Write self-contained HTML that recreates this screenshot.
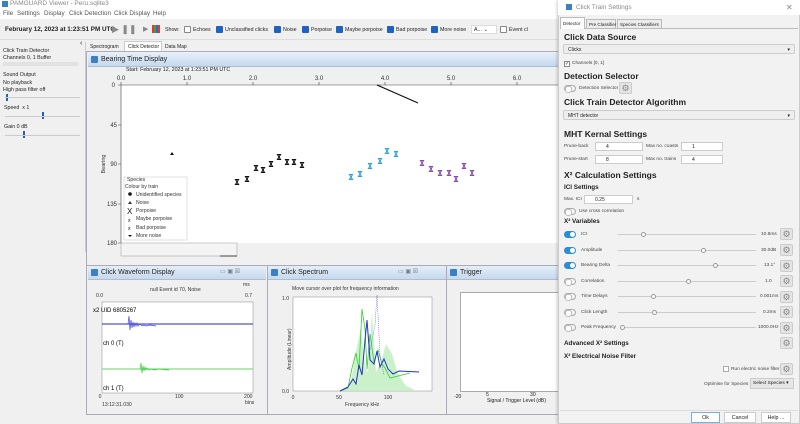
<!DOCTYPE html>
<html><head><meta charset="utf-8"><style>
*{box-sizing:border-box;margin:0;padding:0}
body{width:800px;height:424px;overflow:hidden;background:#f0f0f0;font-family:"Liberation Sans",sans-serif;font-size:6px;color:#222;position:relative}
.a{position:absolute;white-space:nowrap}
.cb{position:absolute;width:7px;height:7px;background:#1e63c0;border-radius:1px}
.cbo{position:absolute;width:7px;height:7px;border:1px solid #888;background:#fff;border-radius:1px}
.h{font-weight:bold;font-size:8.5px;color:#222}
.hs{font-weight:bold;font-size:6.3px}
.dd{position:absolute;height:10px;background:#eee;border:1px solid #ccc;border-radius:2px;font-size:5px;padding:2px 4px}
.tg{position:absolute;width:12px;height:7px;border-radius:4px;border:1px solid #aaa;background:#f4f4f4}
.tg.on{background:#2c8dd0;border-color:#2c8dd0}
.tg.on:after{content:"";position:absolute;right:0;top:0;width:5px;height:5px;border-radius:3px;background:#fff}
.tg:not(.on):after{content:"";position:absolute;left:0;top:0;width:5px;height:5px;border-radius:3px;background:#fff;border:1px solid #bbb}
.gear{position:absolute;width:13px;height:12px;background:#e4e4e4;border:1px solid #ccc;border-radius:2px;color:#888;font-size:9px;line-height:10px;text-align:center}
.sl{position:absolute;height:1px;background:#ccc}
.kn{position:absolute;width:5px;height:5px;border-radius:3px;border:1px solid #999;background:#fff}
.sp{position:absolute;height:9px;border:1px solid #ccc;background:#fff;font-size:5px;padding:1px 0 0 10px}
.ph{position:absolute;height:14px;background:linear-gradient(#e4eef8,#c6d9ee);border-bottom:1px solid #a9bfd6;font-size:7px;padding:3px 0 0 13px}
.ic{position:absolute;left:3px;top:3px;width:7px;height:7px;background:#3b7fc4;border-radius:1px}
.l{font-size:4.8px;color:#444}
</style></head><body>
<div class="a" style="left:0;top:0;width:558px;height:9px;background:#fff;font-size:6.5px;color:#888;padding-left:10px">PAMGUARD Viewer - Peru.sqlite3</div>
<div class="a" style="left:2px;top:1px;width:6px;height:6px;background:#3b7fc4"></div>
<div class="a" style="left:0;top:9px;width:558px;height:10px;background:#fff;font-size:6.3px;color:#555"></div>
<div class="a" style="left:3px;top:10px;font-size:6.3px;color:#555">File</div>
<div class="a" style="left:17px;top:10px;font-size:6.3px;color:#555">Settings</div>
<div class="a" style="left:44px;top:10px;font-size:6.3px;color:#555">Display</div>
<div class="a" style="left:69px;top:10px;font-size:6.3px;color:#555">Click Detection</div>
<div class="a" style="left:114px;top:10px;font-size:6.3px;color:#555">Click Display</div>
<div class="a" style="left:153px;top:10px;font-size:6.3px;color:#555">Help</div>
<div class="a" style="left:0;top:19px;width:558px;height:21px;background:#f0f0f0;border-bottom:1px solid #ddd"></div>
<div class="a" style="left:5px;top:26px;font-size:6.3px;font-weight:bold">February 12, 2023 at 1:23:51 PM UTC</div>
<div class="a" style="left:112px;top:24px;font-size:9px;color:#888">▶ ❚❚</div>
<div class="a" style="left:143px;top:25px;font-size:7px;color:#888">▶</div>
<div class="a" style="left:152px;top:25px;width:8px;height:8px;background:repeating-linear-gradient(90deg,#e33 0 2px,#3a3 2px 4px,#36c 4px 6px)"></div>
<div class="a" style="left:165px;top:27px;font-size:5.3px">Show:</div>
<div class="cbo" style="left:184px;top:26px"></div><div class="a" style="left:193px;top:27px;font-size:5.3px">Echoes</div>
<div class="cb" style="left:216px;top:26px"></div><div class="a" style="left:225px;top:27px;font-size:5.3px">Unclassified clicks</div>
<div class="cb" style="left:274px;top:26px"></div><div class="a" style="left:283px;top:27px;font-size:5.3px">Noise</div>
<div class="cb" style="left:302px;top:26px"></div><div class="a" style="left:311px;top:27px;font-size:5.3px">Porpoise</div>
<div class="cb" style="left:336px;top:26px"></div><div class="a" style="left:345px;top:27px;font-size:5.3px">Maybe porpoise</div>
<div class="cb" style="left:387px;top:26px"></div><div class="a" style="left:396px;top:27px;font-size:5.3px">Bad porpoise</div>
<div class="cb" style="left:431px;top:26px"></div><div class="a" style="left:440px;top:27px;font-size:5.3px">More noise</div>
<div class="a" style="left:471px;top:25px;width:26px;height:9px;background:#fff;border:1px solid #ddd;font-size:5.3px;padding:1px 2px">A... ⌄</div>
<div class="cbo" style="left:500px;top:26px"></div><div class="a" style="left:509px;top:27px;font-size:5.3px">Event cl</div>
<div class="a" style="left:3px;top:48px;font-size:5.3px;line-height:7px">Click Train Detector<br>Channels 0, 1 Buffer</div>
<div class="a" style="left:3px;top:62px;width:75px;height:4px;background:#e2e2e2"></div>
<div class="a" style="left:3px;top:72px;font-size:5.3px;line-height:7.5px">Sound Output<br>No playback<br>High pass filter off</div>
<div class="a" style="left:6px;top:94px;width:2px;height:7px;background:#1e63c0"></div>
<div class="a" style="left:5px;top:97px;width:75px;height:1px;background:#ccc"></div>
<div class="a" style="left:4px;top:105px;font-size:5.3px">Speed &nbsp;x 1</div>
<div class="a" style="left:42px;top:112px;width:2px;height:7px;background:#1e63c0"></div>
<div class="a" style="left:5px;top:116px;width:75px;height:1px;background:#ccc"></div>
<div class="a" style="left:4px;top:124px;font-size:5.3px">Gain 0 dB</div>
<div class="a" style="left:23px;top:131px;width:2px;height:7px;background:#1e63c0"></div>
<div class="a" style="left:5px;top:135px;width:75px;height:1px;background:#ccc"></div>
<div class="a" style="left:80px;top:40px;font-size:7px">‹</div>
<div class="a" style="left:85px;top:42px;height:210px;width:1px;background:#ccc"></div>
<div class="a" style="left:90px;top:44px;font-size:5px">Spectrogram</div>
<div class="a" style="left:124px;top:41px;width:38px;height:10px;background:#fff;border:1px solid #ccc;border-bottom:none;font-size:5px;padding:2px 0 0 3px">Click Detector</div>
<div class="a" style="left:165px;top:44px;font-size:5px">Data Map</div>
<div class="a" style="left:86px;top:51px;width:474px;height:216px;border:1px solid #aab;background:#f0f0f0"></div>
<div class="ph" style="left:88px;top:53px;width:472px"><div class="ic"></div>Bearing Time Display</div>
<div class="a" style="left:126px;top:67px;font-size:5.3px">Start: February 12, 2023 at 1:23:51 PM UTC</div>
<svg class="a" style="left:88px;top:66px" width="472" height="199" viewBox="88 66 472 199">
<rect x="121" y="85" width="439" height="158" fill="#fff"/>
<line x1="121" y1="85" x2="560" y2="85" stroke="#444" stroke-width=".6"/>
<line x1="121" y1="85" x2="121" y2="243" stroke="#444" stroke-width=".6"/>
<g font-size="6" fill="#333" font-family="Liberation Sans" text-anchor="middle">
<text x="121" y="80">0.0</text><text x="187" y="80">1.0</text><text x="253" y="80">2.0</text><text x="319" y="80">3.0</text><text x="385" y="80">4.0</text><text x="451" y="80">5.0</text><text x="517" y="80">6.0</text>
<text x="115" y="87" text-anchor="end">0</text><text x="117" y="127" text-anchor="end">45</text><text x="117" y="166" text-anchor="end">90</text><text x="117" y="206" text-anchor="end">135</text><text x="117" y="245" text-anchor="end">180</text>
<text transform="translate(105,164) rotate(-90)" font-size="5.5">Bearing</text>
</g>
<g stroke="#444" stroke-width=".6"><path d="M121 82v3M187 82v3M253 82v3M319 82v3M385 82v3M451 82v3M517 82v3M118 85h3M118 125h3M118 164h3M118 204h3M118 243h3"/></g>
<line x1="377" y1="85" x2="418" y2="103" stroke="#111" stroke-width="1.2"/>
<path d="M172 152l-2 3h4z" fill="#111"/>
<defs><path id="hg" d="M-1.5 -2.5h3l-3 5h3z" stroke-width="1.1" fill="none"/></defs>
<g stroke="#111"><use href="#hg" x="237" y="182"/><use href="#hg" x="247" y="179"/><use href="#hg" x="256" y="168"/><use href="#hg" x="263" y="170"/><use href="#hg" x="271" y="164"/><use href="#hg" x="279" y="157"/><use href="#hg" x="287" y="162"/><use href="#hg" x="294" y="162"/><use href="#hg" x="302" y="165"/></g>
<g stroke="#2aa4d8"><use href="#hg" x="351" y="177"/><use href="#hg" x="360" y="174"/><use href="#hg" x="370" y="166"/><use href="#hg" x="380" y="161"/><use href="#hg" x="387" y="151"/><use href="#hg" x="396" y="154"/></g>
<g stroke="#8a4aa8"><use href="#hg" x="422" y="163"/><use href="#hg" x="431" y="169"/><use href="#hg" x="440" y="173"/><use href="#hg" x="449" y="173"/><use href="#hg" x="456" y="179"/><use href="#hg" x="464" y="166"/><use href="#hg" x="472" y="173"/></g>
<rect x="124" y="177" width="63" height="63" fill="#fff" stroke="#ccc" stroke-width=".6"/>
<g font-size="5.1" fill="#333" font-family="Liberation Sans">
<text x="127" y="181">Species</text><text x="125" y="188">Colour by train</text>
<text x="136" y="196">Unidentified species</text><text x="136" y="204">Noise</text><text x="136" y="212">Porpoise</text><text x="136" y="220">Maybe porpoise</text><text x="136" y="229">Bad porpoise</text><text x="136" y="237">More noise</text>
<circle cx="130" cy="194" r="1.8" fill="#111"/><path d="M130 201l-2 3h4z"/><text x="127" y="214" font-size="8" fill="#111">X</text><text x="128" y="222" fill="#111">x</text><text x="128" y="230" fill="#111">x</text><path d="M128 235h4l-2 2z" fill="#111"/>
</g>
<rect x="121" y="243" width="439" height="13" fill="#f0f0f0"/>
<rect x="121" y="243" width="116" height="13" fill="#f4f4f4" stroke="#999" stroke-width=".5"/>
<line x1="220" y1="256" x2="237" y2="256" stroke="#444"/>
</svg>
<div class="a" style="left:86px;top:265px;width:182px;height:150px;border:1px solid #aab;background:#f0f0f0"></div>
<div class="ph" style="left:88px;top:266px;width:178px"><div class="ic"></div>Click Waveform Display</div>
<div class="a" style="left:220px;top:268px;font-size:6px;color:#778">▭ ▣ ☒</div>
<svg class="a" style="left:88px;top:280px" width="178" height="134" viewBox="88 280 178 134">
<g font-size="5.1" fill="#333" font-family="Liberation Sans">
<text x="150" y="291">null Event id 70, Noise</text><text x="243" y="286">ms</text>
<text x="96" y="297">0.0</text><text x="245" y="297">0.7</text>
<text x="100" y="398" text-anchor="middle">0</text><text x="175" y="398">100</text><text x="244" y="398">200</text><text x="245" y="404">bins</text><text x="102" y="406">13:12:31.030</text>
</g>
<rect x="102" y="302" width="151" height="91" fill="#fff" stroke="#888" stroke-width=".5"/>
<text x="93" y="312" font-size="6" font-family="Liberation Sans">x2 UID 6805267</text>
<text x="103" y="345" font-size="6" font-family="Liberation Sans">ch 0 (T)</text>
<text x="103" y="390" font-size="6" font-family="Liberation Sans">ch 1 (T)</text>
<line x1="102" y1="324" x2="253" y2="324" stroke="#2a2ab8"/>
<path d="M128 324l1-8 1 14 1-10 1 8 1-6 1 5 1-4 1 3 1-3 1 3 2-2 2 2 2-1 2 1 4-1 6 1" stroke="#4444e0" fill="none" stroke-width=".7"/>
<line x1="102" y1="369" x2="253" y2="369" stroke="#6ed06e"/>
<path d="M140 369l1-6 1 10 1-7 1 5 1-4 1 3 1-2 2 2 2-1 3 1 5-1 10 1" stroke="#3c3" fill="none" stroke-width=".7"/>
</svg>
<div class="a" style="left:267px;top:265px;width:180px;height:150px;border:1px solid #aab;background:#f0f0f0"></div>
<div class="ph" style="left:268px;top:266px;width:178px"><div class="ic"></div>Click Spectrum</div>
<div class="a" style="left:398px;top:268px;font-size:6px;color:#778">▭ ▣ ☒</div>
<svg class="a" style="left:268px;top:280px" width="178" height="134" viewBox="268 280 178 134">
<g font-size="5.1" fill="#333" font-family="Liberation Sans">
<text x="292" y="290">Move cursor over plot for frequency information</text>
<text x="282" y="300">1.0</text><text x="282" y="393">0.0</text>
<text x="293" y="399" text-anchor="middle">0</text><text x="339" y="399" text-anchor="middle">50</text><text x="388" y="399" text-anchor="middle">100</text>
<text x="345" y="406">Frequency kHz</text>
<text transform="translate(291,370) rotate(-90)">Amplitude (Linear)</text>
</g>
<rect x="293" y="297" width="139" height="94" fill="#fff" stroke="#888" stroke-width=".5"/>
<path d="M293 391H340l10-4 5-30 6-30 4 40 3 5 4-60 4 60 5-10 5-18 6 10 6 20 8 12 7 3V391z" fill="#bdeebd" opacity=".8"/>
<path d="M340 391l8-3 4-20 4-15 3 16 3-60 3 20 2 40 3-35 4 28 4-12 4 14 3 4 5 10 20 -5" stroke="#3c3" fill="none" stroke-width=".8"/>
<path d="M340 391l8-4 5-8 3 5 3-19 3 10 3-35 2-20 3 40 4 4 3-13 3 16 4-8 4 10 5 5 6-3 20 1" stroke="#2233bb" fill="none" stroke-width="1"/>
<path d="M365 340l2 -20 3 30 5-25 2-30 3 60 4 20" stroke="#4444e0" fill="none" stroke-width=".5" stroke-dasharray="1 1"/>
</svg>
<div class="a" style="left:446px;top:265px;width:114px;height:150px;border:1px solid #aab;background:#f0f0f0"></div>
<div class="ph" style="left:447px;top:266px;width:113px"><div class="ic"></div>Trigger</div>
<div class="a" style="left:460px;top:292px;width:100px;height:100px;background:#fff;border:1px solid #aaa"></div>
<div class="a" style="left:454px;top:394px;font-size:5.1px">-20</div>
<div class="a" style="left:486px;top:392px;font-size:5.1px">5</div>
<div class="a" style="left:530px;top:392px;font-size:5.1px">30</div>
<div class="a" style="left:487px;top:398px;font-size:5.1px">Signal / Trigger Level (dB)</div>
<!-- dialog -->
<div class="a" style="left:558px;top:0;width:242px;height:424px;background:#f2f2f2;border:1px solid #ccc;box-shadow:-1px 0 3px rgba(0,0,0,.2)"></div>
<div class="a" style="left:558px;top:0;width:242px;height:15px;background:#fff"></div>
<div class="a" style="left:566px;top:4px;width:6px;height:6px;background:#3b7fc4"></div>
<div class="a" style="left:576px;top:4px;font-size:6.5px;color:#888">Click Train Settings</div>
<div class="a" style="left:786px;top:3px;font-size:8px;color:#888">✕</div>
<div class="a" style="left:560px;top:28px;width:238px;height:383px;border-top:1px solid #bbb"></div>
<div class="a" style="left:560px;top:17px;width:25px;height:12px;background:#fff;border:1px solid #bbb;border-bottom:none;font-size:4.6px;padding:3px 2px">Detector</div>
<div class="a" style="left:586px;top:19px;width:30px;height:10px;background:#ececec;border:1px solid #bbb;font-size:4.6px;padding:2px 2px">Pre Classifier</div>
<div class="a" style="left:617px;top:19px;width:45px;height:10px;background:#ececec;border:1px solid #bbb;font-size:4.6px;padding:2px 2px">Species Classifiers</div>
<div class="a h" style="left:564px;top:32px">Click Data Source</div>
<div class="dd" style="left:563px;top:44px;width:232px">Clicks<span style="float:right">▾</span></div>
<div class="a" style="left:564px;top:61px;width:6px;height:6px;border:1px solid #888;background:#fff;font-size:5px;line-height:5px">✓</div>
<div class="a l" style="left:572px;top:61px">Channels [0, 1]</div>
<div class="a h" style="left:564px;top:71px">Detection Selector</div>
<div class="tg" style="left:564px;top:85px"></div>
<div class="a l" style="left:579px;top:86px">Detection Selector</div>
<div class="gear" style="left:619px;top:82px">⚙</div>
<div class="a h" style="left:564px;top:97px">Click Train Detector Algorithm</div>
<div class="dd" style="left:563px;top:110px;width:232px">MHT detector<span style="float:right">▾</span></div>
<div class="a h" style="left:564px;top:129px">MHT Kernal Settings</div>
<div class="a l" style="left:564px;top:144px">Prune-back</div>
<div class="sp" style="left:595px;top:142px;width:48px">4</div>
<div class="a l" style="left:646px;top:144px">Max no. coasts</div>
<div class="sp" style="left:681px;top:142px;width:42px">1</div>
<div class="a l" style="left:564px;top:157px">Prune-start</div>
<div class="sp" style="left:595px;top:155px;width:48px">8</div>
<div class="a l" style="left:646px;top:157px">Max no. trains</div>
<div class="sp" style="left:681px;top:155px;width:42px">4</div>
<div class="a h" style="left:564px;top:170px">X² Calculation Settings</div>
<div class="a hs" style="left:564px;top:184px">ICI Settings</div>
<div class="a l" style="left:564px;top:197px">Max. ICI</div>
<div class="sp" style="left:584px;top:195px;width:49px">0.25</div>
<div class="a l" style="left:637px;top:197px">s</div>
<div class="tg" style="left:564px;top:208px"></div>
<div class="a l" style="left:579px;top:209px">Use cross correlation</div>
<div class="a hs" style="left:564px;top:218px">X² Variables</div>

<div class="tg on" style="left:564px;top:231px"></div><div class="a l" style="left:581px;top:232px">ICI</div><div class="sl" style="left:618px;top:234px;width:138px"></div><div class="kn" style="left:641px;top:232px"></div><div class="a l" style="left:761px;top:232px">10.8ms</div><div class="gear" style="left:780px;top:228px">⚙</div>
<div class="tg on" style="left:564px;top:247px"></div><div class="a l" style="left:581px;top:248px">Amplitude</div><div class="sl" style="left:618px;top:250px;width:138px"></div><div class="kn" style="left:701px;top:248px"></div><div class="a l" style="left:761px;top:248px">30.0dB</div><div class="gear" style="left:780px;top:244px">⚙</div>
<div class="tg on" style="left:564px;top:262px"></div><div class="a l" style="left:581px;top:263px">Bearing Delta</div><div class="sl" style="left:618px;top:265px;width:138px"></div><div class="kn" style="left:713px;top:263px"></div><div class="a l" style="left:764px;top:263px">13.1°</div><div class="gear" style="left:780px;top:260px">⚙</div>
<div class="tg" style="left:564px;top:278px"></div><div class="a l" style="left:581px;top:279px">Correlation</div><div class="sl" style="left:618px;top:281px;width:138px"></div><div class="kn" style="left:686px;top:279px"></div><div class="a l" style="left:765px;top:279px">1.0</div><div class="gear" style="left:780px;top:275px">⚙</div>
<div class="tg" style="left:564px;top:293px"></div><div class="a l" style="left:581px;top:294px">Time Delays</div><div class="sl" style="left:618px;top:296px;width:138px"></div><div class="kn" style="left:651px;top:294px"></div><div class="a l" style="left:760px;top:294px">0.001ms</div><div class="gear" style="left:780px;top:291px">⚙</div>
<div class="tg" style="left:564px;top:309px"></div><div class="a l" style="left:581px;top:310px">Click Length</div><div class="sl" style="left:618px;top:312px;width:138px"></div><div class="kn" style="left:652px;top:310px"></div><div class="a l" style="left:763px;top:310px">0.2ms</div><div class="gear" style="left:780px;top:306px">⚙</div>
<div class="tg" style="left:564px;top:324px"></div><div class="a l" style="left:581px;top:325px">Peak Frequency</div><div class="sl" style="left:622px;top:327px;width:134px"></div><div class="kn" style="left:620px;top:325px"></div><div class="a l" style="left:758px;top:325px">1000.0Hz</div><div class="gear" style="left:780px;top:322px">⚙</div>
<div class="a hs" style="left:564px;top:340px">Advanced X² Settings</div><div class="gear" style="left:780px;top:337px">⚙</div>
<div class="a hs" style="left:564px;top:353px">X² Electrical Noise Filter</div>
<div class="a" style="left:723px;top:366px;width:6px;height:6px;border:1px solid #aaa;background:#fff"></div>
<div class="a l" style="left:731px;top:367px">Run electric noise filter</div><div class="gear" style="left:780px;top:363px">⚙</div>
<div class="a l" style="left:704px;top:382px">Optimise for Species</div>
<div class="a" style="left:750px;top:378px;width:44px;height:11px;background:#e6e6e6;border:1px solid #ccc;font-size:4.8px;padding:2px 2px">Select Species ▾</div>
<div class="a" style="left:560px;top:410px;width:238px;height:1px;background:#ddd"></div>
<div class="a" style="left:691px;top:412px;width:29px;height:11px;background:#fff;border:1px solid #7aaee0;font-size:5.3px;text-align:center;padding-top:2px">Ok</div>
<div class="a" style="left:724px;top:412px;width:32px;height:11px;background:#fff;border:1px solid #ccc;font-size:5.3px;text-align:center;padding-top:2px">Cancel</div>
<div class="a" style="left:761px;top:412px;width:30px;height:11px;background:#fff;border:1px solid #ccc;font-size:5.3px;text-align:center;padding-top:2px">Help ...</div>
</body></html>
